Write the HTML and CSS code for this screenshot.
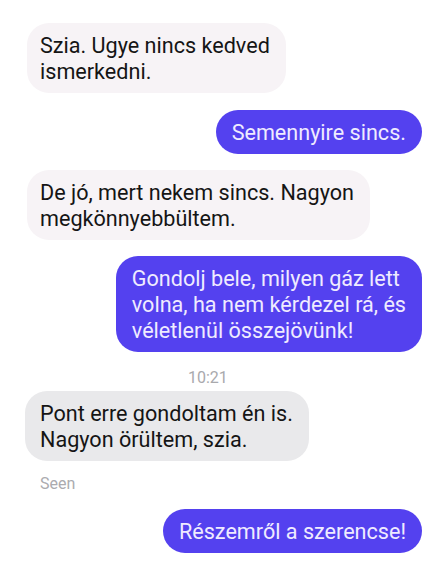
FILE: index.html
```html
<!DOCTYPE html>
<html lang="hu">
<head>
<meta charset="utf-8">
<title>Chat</title>
<link rel="stylesheet" href="styles.css">
</head>
<body>
<div class="chat">
  <div class="msg in first">Szia. Ugye nincs kedved<br>ismerkedni.</div>
  <div class="msg out gap">Semennyire sincs.</div>
  <div class="msg in gap">De jó, mert nekem sincs. Nagyon<br>megkönnyebbültem.</div>
  <div class="msg out gap wide">Gondolj bele, milyen gáz lett<br>volna, ha nem kérdezel rá, és<br>véletlenül összejövünk!</div>
  <div class="time">10:21</div>
  <div class="msg in gray after-time">Pont erre gondoltam én is.<br>Nagyon örültem, szia.</div>
  <div class="seen">Seen</div>
  <div class="msg out after-seen">Részemről a szerencse!</div>
</div>
</body>
</html>
```

FILE: styles.css
```css
* { box-sizing: border-box; }
html, body {
  margin: 0;
  padding: 0;
  background: #ffffff;
}
body {
  font-family: Roboto, "Noto Sans", sans-serif;
  width: 442px;
  height: 562px;
  overflow: hidden;
}
.chat {
  display: flex;
  flex-direction: column;
  padding: 23px 20px 0 27px;
}
.msg {
  font-size: 21.6px;
  line-height: 26px;
  padding: 10px 16px 8px 13px;
  border-radius: 22px;
  white-space: nowrap;
}
.in {
  align-self: flex-start;
  background: #f7f3f6;
  color: #151515;
}
.in.gray {
  background: #e9e9eb;
  margin-left: -2px;
  padding-left: 15px;
}
.out {
  align-self: flex-end;
  background: #5441ef;
  color: #efebff;
  padding-left: 16px;
  padding-right: 16px;
}
.out.wide {
  padding-left: 16px;
}
.gap { margin-top: 16px; }
.msg.out.gap:nth-child(2) { margin-top: 17px; }
.time {
  align-self: flex-start;
  margin-left: 161px;
  margin-top: 16px;
  font-size: 16px;
  line-height: 20px;
  color: #a9a9ad;
}
.after-time { margin-top: 3px; }
.seen {
  margin-top: 13px;
  margin-left: 13px;
  font-size: 16px;
  line-height: 20px;
  color: #ababaf;
}
.after-seen { margin-top: 15px; }
```
